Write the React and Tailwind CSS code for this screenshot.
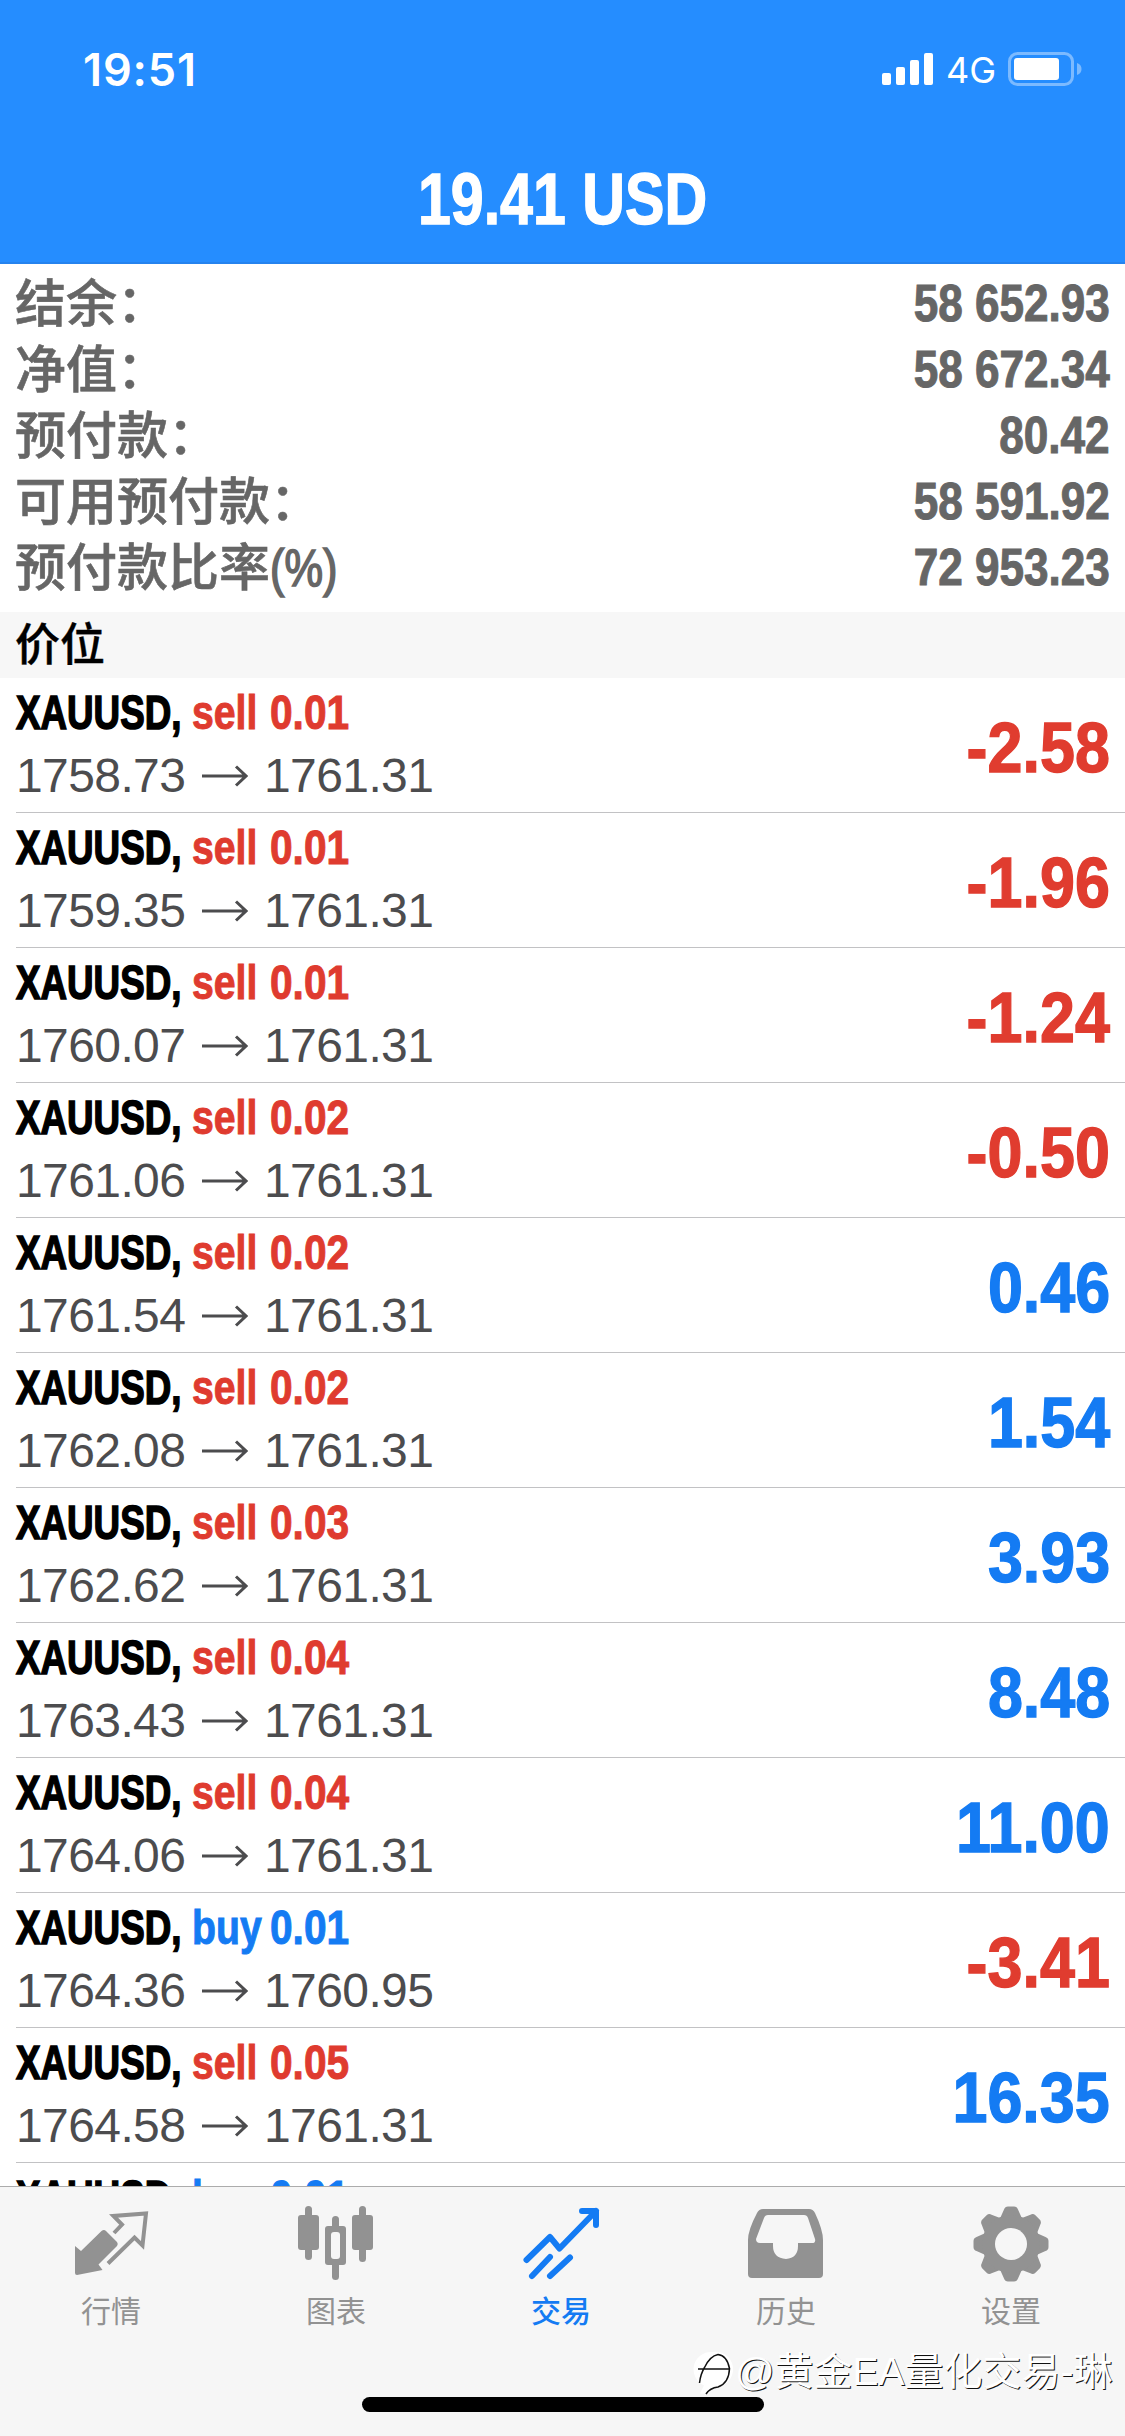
const account = [
  { label: '结余：', value: '58 652.93' },
  { label: '净值：', value: '58 672.34' },
  { label: '预付款：', value: '80.42' },
  { label: '可用预付款：', value: '58 591.92' },
  { label: '预付款比率', unit: '(%)', value: '72 953.23' },
]

const positions = [
  { side: 'sell', volume: '0.01', open: '1758.73', price: '1761.31', profit: '-2.58' },
  { side: 'sell', volume: '0.01', open: '1759.35', price: '1761.31', profit: '-1.96' },
  { side: 'sell', volume: '0.01', open: '1760.07', price: '1761.31', profit: '-1.24' },
  { side: 'sell', volume: '0.02', open: '1761.06', price: '1761.31', profit: '-0.50' },
  { side: 'sell', volume: '0.02', open: '1761.54', price: '1761.31', profit: '0.46' },
  { side: 'sell', volume: '0.02', open: '1762.08', price: '1761.31', profit: '1.54' },
  { side: 'sell', volume: '0.03', open: '1762.62', price: '1761.31', profit: '3.93' },
  { side: 'sell', volume: '0.04', open: '1763.43', price: '1761.31', profit: '8.48' },
  { side: 'sell', volume: '0.04', open: '1764.06', price: '1761.31', profit: '11.00' },
  { side: 'buy', volume: '0.01', open: '1764.36', price: '1760.95', profit: '-3.41' },
  { side: 'sell', volume: '0.05', open: '1764.58', price: '1761.31', profit: '16.35' },
  { side: 'buy', volume: '0.01' },
]

function StatusBar() {
  return (
    <div className="flex h-[138px] items-center justify-between pl-[83px] pr-[43px] text-white">
      <span className="font-['Inter'] text-[45px] font-semibold leading-none tracking-[0.9px]">19:51</span>
      <div className="flex items-center">
        <svg width="51" height="32" viewBox="0 0 51 32" fill="currentColor">
          <rect x="0" y="20" width="9" height="12" rx="2" />
          <rect x="14" y="14" width="9" height="18" rx="2" />
          <rect x="28" y="7" width="9" height="25" rx="2" />
          <rect x="42" y="0" width="9" height="32" rx="2" />
        </svg>
        <span className="ml-[13px] w-[50px] pt-[2px] font-['Inter'] text-[36px] leading-none">4G</span>
        <svg className="ml-[12px]" width="74" height="34" viewBox="0 0 74 34" fill="none">
          <rect x="1.5" y="1.5" width="63" height="31" rx="8" stroke="#fff" strokeOpacity=".4" strokeWidth="3" />
          <rect x="6" y="6" width="45" height="22" rx="3" fill="#fff" />
          <path d="M69 11c3 1 4.500 3 4.500 6s-1.500 5-4.500 6z" fill="#fff" fillOpacity=".4" />
        </svg>
      </div>
    </div>
  )
}

function Position({ side, volume, open, price, profit }) {
  const loss = profit && profit.startsWith('-')
  return (
    <div className="ml-4 flex h-[135px] shrink-0 items-center justify-between border-b border-[#c2c2c4] pr-[15px]">
      <div className="h-[134px] pt-[3px]">
        <div className={`flex h-[63px] items-center whitespace-pre text-[49px] font-bold leading-none [-webkit-text-stroke:1px] ${side === 'sell' ? 'text-[#df3b2f]' : 'text-[#147bf3]'}`}>
          <span className="w-[176px] origin-left scale-x-[0.75] text-black [-webkit-text-stroke:1.6px_black]">XAUUSD,</span>
          <span className="w-[78px] origin-left scale-x-[0.8]">{side}</span>
          <span className="origin-left scale-x-[0.83]">{volume}</span>
        </div>
        {open && (
          <div className="flex h-[64px] items-center text-[48px] leading-none tracking-[-0.6px] text-[#4c4c4e]">
            <span className="w-[186px]">{open}</span>
            <svg width="46" height="22" viewBox="0 0 46 22" fill="none" stroke="currentColor" strokeWidth="3">
              <path d="M0 11h43M34 1.500l10 9.500-10 9.500" />
            </svg>
            <span className="ml-[16px]">{price}</span>
          </div>
        )}
      </div>
      {profit && (
        <span className={`origin-right scale-x-[0.885] pt-[5px] text-[71px] font-bold leading-none [-webkit-text-stroke:1.4px] ${loss ? 'text-[#e03c2f]' : 'text-[#147bf3]'}`}>
          {profit}
        </span>
      )}
    </div>
  )
}

function QuotesIcon() {
  return (
    <svg width="76" height="76" viewBox="0 0 76 76" fill="none">
      <path d="M2 40l6 5 20.500-20q2.500-2 4.500 0l11 11q1.500 2 0 4L25.500 58.500l4 5.500L4 69q-2 0-2-2z" fill="#929292" />
      <path d="M41 27l8-8.500-8.500-8.500L73 7.500l-3.500 32-8-8L35 57.500" stroke="#929292" strokeWidth="4" />
    </svg>
  )
}

function ChartIcon() {
  return (
    <svg width="76" height="76" viewBox="0 0 76 76" fill="#929292">
      <rect x="7" y="0" width="7" height="54" rx="3.500" />
      <rect x="0" y="9" width="21" height="35" rx="3" />
      <rect x="34" y="10" width="7" height="64" rx="3.500" />
      <rect x="27" y="20" width="21" height="39" rx="3" />
      <rect x="33" y="26" width="9" height="27" rx="3" fill="#f6f6f6" />
      <rect x="61" y="0" width="7" height="56" rx="3.500" />
      <rect x="54" y="9" width="21" height="35" rx="3" />
    </svg>
  )
}

function TradeIcon() {
  return (
    <svg width="76" height="76" viewBox="0 0 76 76" fill="none" stroke="#147bf3" strokeWidth="6" strokeLinecap="round" strokeLinejoin="round">
      <path d="M3.500 54L27 31l9.500 11.500L73 5M59 5h14v14M9 70l18-19M27 70l20-18.500" />
    </svg>
  )
}

function HistoryIcon() {
  return (
    <svg width="76" height="76" viewBox="0 0 76 76">
      <path d="M15 3h46q4 0 6 4 8 17 8 27v34q0 4-4 4H4q-4 0-4-4V34Q0 24 9 7q2-4 6-4z" fill="#929292" />
      <path d="M20 9h36q3 0 4 3l7 21q1 4-3 4H50v3q0 12-12 13-13-1-13-13v-3H12q-4 0-4-4l8-21q1-3 4-3z" fill="#f6f6f6" />
    </svg>
  )
}

function SettingsIcon() {
  return (
    <svg width="76" height="76" viewBox="0 0 76 76" fill="#929292">
      {[0, 45, 90, 135].map((deg) => (
        <path key={deg} transform={`rotate(${deg} 38 38)`} d="M35 .5h6q3 0 4 3l4 9v51l-4 9q-1 3-4 3h-6q-3 0-4-3l-4-9v-51l4-9q1-3 4-3z" />
      ))}
      <circle cx="38" cy="38" r="29" />
      <circle cx="38" cy="38" r="16" fill="#f6f6f6" />
    </svg>
  )
}

const tabs = [
  { label: '行情', Icon: QuotesIcon },
  { label: '图表', Icon: ChartIcon },
  { label: '交易', Icon: TradeIcon, active: true },
  { label: '历史', Icon: HistoryIcon },
  { label: '设置', Icon: SettingsIcon },
]

function TabBar() {
  return (
    <nav className="relative h-[250px] shrink-0 border-t border-[#acacac] bg-[#f6f6f6]">
      <div className="grid grid-cols-5 pt-[19px]">
        {tabs.map(({ label, Icon, active }) => (
          <div key={label} className="flex flex-col items-center gap-[10px] pr-[3px] [&>svg]:overflow-visible">
            <Icon />
            <span className={`text-[30px] leading-10 ${active ? 'font-medium text-[#147bf3]' : 'text-[#929292]'}`}>{label}</span>
          </div>
        ))}
      </div>
      <div className="absolute bottom-6 left-[362px] h-[15px] w-[402px] rounded-full bg-black" />
      <div className="absolute left-[693px] top-[160px] flex items-center whitespace-nowrap text-white">
        <svg width="42" height="50" viewBox="0 0 42 50">
          <path d="M19 5a17.500 17.500 0 0 1 7 34.500q-7 1-10 7H7l4-8A17.500 17.500 0 0 1 19 5z" fill="#fff" />
          <path d="M6.500 36q1-9 5-15.500Q17 9 25 7.500q9 1 11.500 14Q36 36 25 40q-8 1-12 7M5 22h31" fill="none" stroke="#111" strokeWidth="1.500" />
        </svg>
        <span className="text-[39px] leading-[50px] [text-shadow:1px_1px_0_#111]">@黄金EA量化交易-琳</span>
      </div>
    </nav>
  )
}

export default function App() {
  return (
    <div className="flex h-[2436px] w-[1125px] flex-col overflow-hidden bg-white font-['Liberation_Sans','Noto_Sans_CJK_SC',sans-serif]">
      <header className="h-[264px] shrink-0 border-b-2 border-[#2583ee] bg-[#258dff]">
        <StatusBar />
        <h1 className="scale-x-[0.81] pt-[23px] text-center text-[73px] font-bold leading-[76px] text-white [-webkit-text-stroke:1.4px]">19.41 USD</h1>
      </header>

      <section className="h-[348px] shrink-0 pl-[15px] pr-[15px] pt-[6px] font-bold text-[#666]">
        {account.map(({ label, unit, value }) => (
          <div key={label} className="flex h-[66px] items-center justify-between">
            <span className="whitespace-nowrap pt-[2px] text-[51px] font-medium leading-none [-webkit-text-stroke:0.6px]">
              {label}
              {unit && <span className="inline-block origin-left scale-x-[0.85] [-webkit-text-stroke:1.6px]">{unit}</span>}
            </span>
            <span className="origin-right scale-x-[0.865] text-[51px] leading-none [-webkit-text-stroke:1px]">{value}</span>
          </div>
        ))}
      </section>

      <h2 className="h-[66px] shrink-0 bg-[#f7f7f7] px-[15px] text-[45px] font-medium leading-[68px] text-black [-webkit-text-stroke:0.4px]">价位</h2>

      <main className="flex min-h-0 flex-1 flex-col overflow-hidden">
        {positions.map((p, i) => (
          <Position key={i} {...p} />
        ))}
      </main>

      <TabBar />
    </div>
  )
}
